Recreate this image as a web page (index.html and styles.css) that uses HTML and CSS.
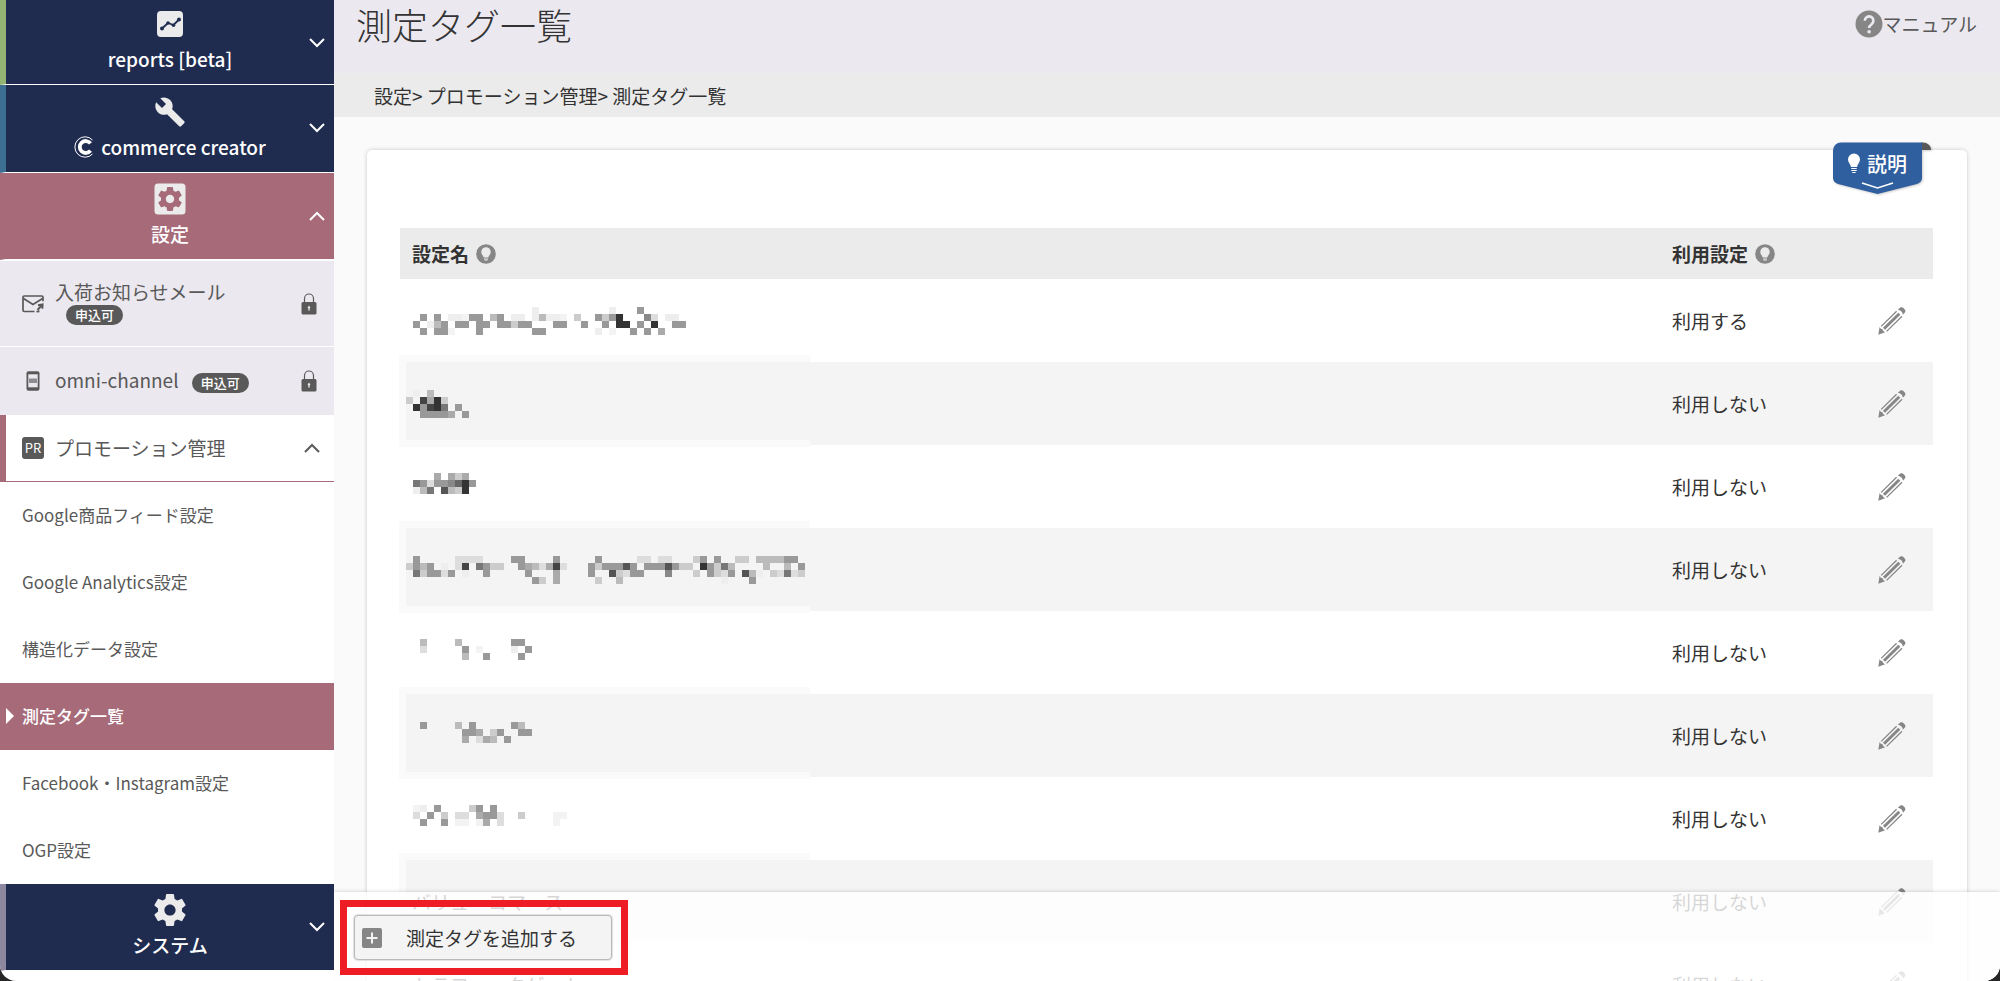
FILE: index.html
```html
<!DOCTYPE html>
<html lang="ja">
<head>
<meta charset="utf-8">
<title>測定タグ一覧</title>
<link rel="stylesheet" href="styles.css">
</head>
<body>
<svg class="defs" aria-hidden="true">
  <symbol id="chev-down" viewBox="0 0 16 10"><path d="M1 1l7 7 7-7" fill="none" stroke="currentColor" stroke-width="2"/></symbol>
  <symbol id="chev-up" viewBox="0 0 16 10"><path d="M1 9l7-7 7 7" fill="none" stroke="currentColor" stroke-width="2"/></symbol>
  <symbol id="gear" viewBox="2 2 20 20"><path fill="currentColor" d="M19.43 12.98c.04-.32.07-.64.07-.98s-.03-.66-.07-.98l2.11-1.65c.19-.15.24-.42.12-.64l-2-3.46c-.12-.22-.39-.3-.61-.22l-2.49 1c-.52-.4-1.08-.73-1.69-.98l-.38-2.65C14.46 2.18 14.25 2 14 2h-4c-.25 0-.46.18-.49.42l-.38 2.65c-.61.25-1.17.59-1.69.98l-2.49-1c-.23-.09-.49 0-.61.22l-2 3.46c-.13.22-.07.49.12.64l2.11 1.65c-.04.32-.07.65-.07.98s.03.66.07.98l-2.11 1.65c-.19.15-.24.42-.12.64l2 3.46c.12.22.39.3.61.22l2.49-1c.52.4 1.08.73 1.69.98l.38 2.65c.03.24.24.42.49.42h4c.25 0 .46-.18.49-.42l.38-2.65c.61-.25 1.17-.59 1.69-.98l2.49 1c.23.09.49 0 .61-.22l2-3.46c.12-.22.07-.49-.12-.64l-2.11-1.65zM12 15.5c-1.93 0-3.5-1.57-3.5-3.5s1.57-3.5 3.5-3.5 3.5 1.57 3.5 3.5-1.57 3.5-3.5 3.5z"/></symbol>
  <symbol id="lock" viewBox="0 0 16 22"><path d="M3.5 10V5.5a4.5 4.5 0 0 1 9 0V10" fill="none" stroke="#595959" stroke-width="1.2"/><rect x=".5" y="9" width="15" height="12.500" rx="1.500" fill="#595959"/><path d="M8 12.500l1.500 2.300-.8.300v2.400H7.300v-2.400l-.8-.3z" fill="#ebe8ef"/></symbol>
  <symbol id="hint" viewBox="0 0 20 20"><circle cx="10" cy="10" r="9.800" fill="#868686"/><path d="M10 3.200a4.700 4.700 0 0 1 4.700 4.700c0 2.400-1.900 3.500-2.400 5.600H7.700c-.5-2.100-2.400-3.200-2.400-5.600A4.700 4.700 0 0 1 10 3.200z" fill="#ebebeb"/><path d="M8 14.200h4v1.300L11 17H9l-1-1.500z" fill="#c4c4c4"/></symbol>
  <symbol id="pencil" viewBox="0 0 28 28"><g fill="#868686"><path d="M19.800 2.700L22 .8c1.300-.9 2.700-.5 3.900.6 1.400 1.300 2 2.700 1 4.100l-2 2.300c-.2-1.400-.7-2.500-1.700-3.500-1-.9-2.100-1.400-3.400-1.600z"/><path d="M.3 27.700l1.300-7.600 1.200 1.600 1.700.5.700 1.800 1.900 1.200z"/></g><path d="M3.200 19.400L18.600 4.200M8.600 24.400L24 9.200" stroke="#868686" stroke-width="1.300" fill="none"/><path d="M6 21.700L21.300 6.700" stroke="#868686" stroke-width="3" fill="none"/></symbol>
</svg>

<div class="page">
  <nav class="side">
    <button class="group group-reports" type="button">
      <svg class="group-icon" viewBox="0 0 32 32"><rect x="3" y="3" width="26" height="26" rx="4" fill="#ebebeb"/><path d="M8 20.500l6-5.500 5.500 2 5.500-5.500" fill="none" stroke="#1f2c50" stroke-width="1.800"/><g fill="#1f2c50"><circle cx="8" cy="20.500" r="2"/><circle cx="14" cy="15" r="1.800"/><circle cx="19.500" cy="17.300" r="1.800"/><circle cx="25" cy="11.500" r="2"/></g></svg>
      <span class="group-label">reports [beta]</span>
      <svg class="chev"><use href="#chev-down"/></svg>
    </button>
    <button class="group group-commerce" type="button">
      <svg class="group-icon" viewBox="0 0 24 24"><path fill="#ebebeb" d="M22.700 19l-9.100-9.100c.9-2.300.4-5-1.500-6.900-2-2-5-2.400-7.400-1.300L9 6 6 9 1.600 4.700C.4 7.100.9 10.100 2.900 12.100c1.900 1.900 4.600 2.400 6.900 1.500l9.100 9.100c.4.400 1 .4 1.400 0l2.300-2.300c.5-.4.500-1.100.1-1.400z"/></svg>
      <span class="group-label"><svg class="brand" viewBox="0 0 20 22"><path d="M18.500 4A10.200 10.200 0 1 0 18.500 18" fill="none" stroke="#fff" stroke-width="1"/><path d="M16.500 7.300A6 6 0 1 0 16.500 14.700" fill="none" stroke="#fff" stroke-width="3.800"/></svg>commerce creator</span>
      <svg class="chev"><use href="#chev-down"/></svg>
    </button>
    <button class="group group-settings" type="button">
      <svg class="group-icon" viewBox="0 0 32 32"><rect x=".5" y=".5" width="31" height="31" rx="3.500" fill="#ebebeb"/><svg x="4" y="4" width="24" height="24" color="#a66a79"><use href="#gear"/></svg></svg>
      <span class="group-label">設定</span>
      <svg class="chev"><use href="#chev-up"/></svg>
    </button>

    <a class="item item-tall" href="#">
      <svg class="item-icon" viewBox="0 0 22 22"><path d="M12.500 18.500H2.200A1.200 1.200 0 0 1 1 17.300V4.200A1.200 1.200 0 0 1 2.200 3h17.600A1.200 1.200 0 0 1 21 4.200v4" fill="none" stroke="#595959" stroke-width="1.700"/><path d="M1.500 5.500l9.500 6 9.500-6" fill="none" stroke="#595959" stroke-width="1.700"/><path d="M15.500 17l4.500-5M16 12.200l4.600-.8-.2 4.400M14.500 18.600l3-.2" fill="none" stroke="#595959" stroke-width="1.900"/></svg>
      <span class="item-text">入荷お知らせメール <span class="badge">申込可</span></span>
      <svg class="lock"><use href="#lock"/></svg>
    </a>
    <a class="item" href="#">
      <svg class="item-icon" viewBox="0 0 22 22"><rect x="4.500" y="1.200" width="13" height="19.600" rx="2" fill="#595959"/><rect x="6.300" y="4.300" width="9.400" height="13" fill="#ebe8ef"/><path d="M8 8.500v4.500M10 8.500v4.500M12 8.500v4.500M14 8.500v4.500" stroke="#595959" stroke-width="1.300"/></svg>
      <span class="item-text">omni-channel <span class="badge">申込可</span></span>
      <svg class="lock"><use href="#lock"/></svg>
    </a>
    <button class="item item-open" type="button">
      <span class="pr">PR</span>
      <span class="item-text">プロモーション管理</span>
      <svg class="chev"><use href="#chev-up"/></svg>
    </button>
    <ul class="sub">
      <li><a href="#">Google商品フィード設定</a></li>
      <li><a href="#">Google Analytics設定</a></li>
      <li><a href="#">構造化データ設定</a></li>
      <li><a class="current" href="#">測定タグ一覧</a></li>
      <li><a href="#">Facebook・Instagram設定</a></li>
      <li><a href="#">OGP設定</a></li>
    </ul>
    <button class="group group-system" type="button">
      <svg class="group-icon" color="#ebebeb"><use href="#gear"/></svg>
      <span class="group-label">システム</span>
      <svg class="chev"><use href="#chev-down"/></svg>
    </button>
  </nav>

  <main class="main">
    <header class="head">
      <h1>測定タグ一覧</h1>
      <a class="manual" href="#"><svg class="manual-icon" viewBox="0 0 28 28"><circle cx="14" cy="14" r="13.500" fill="#868686"/><path d="M9.800 10.800a4.300 4.300 0 1 1 6.900 3.300c-1.600 1.200-2.600 1.900-2.600 4" fill="none" stroke="#ebe8ef" stroke-width="2.600"/><circle cx="14.100" cy="21.800" r="1.800" fill="#ebe8ef"/></svg>マニュアル</a>
    </header>
    <div class="crumbs">設定&gt; プロモーション管理&gt; 測定タグ一覧</div>

    <section class="card">
      <button class="explain" type="button">
        <svg class="explain-shape" viewBox="0 0 98 53"><path d="M88 .5h2a8 7 0 0 1 8 7.500H88z" fill="#595959"/><path d="M8 .5h81V36c0 3-2 5-5 6L44.500 52 5 42c-3-1-5-3-5-6V8.500a8 8 0 0 1 8-8z" fill="#2f5f9e"/><path d="M29 41l15.500 5L60 41" fill="none" stroke="#fff" stroke-width="1.600"/><path d="M21 11.500a6 6 0 0 1 6 6c0 3-2.500 4.500-3 7.500h-6c-.5-3-3-4.500-3-7.500a6 6 0 0 1 6-6z" fill="#fff"/><path d="M18.300 26.500h5.400M18.300 28.500h5.400M19.300 30.500h3.400" stroke="#fff"/></svg>
        <span class="explain-label">説明</span>
      </button>
      <table class="tags">
        <colgroup><col><col class="col-use"><col class="col-edit"></colgroup>
        <thead>
          <tr><th scope="col"><span class="th">設定名<svg class="hint"><use href="#hint"/></svg></span></th><th scope="col"><span class="th">利用設定<svg class="hint"><use href="#hint"/></svg></span></th><th></th></tr>
        </thead>
        <tbody>
          <tr><td class="masked"><svg class="mosaic" data-rows="..................e..........e...9|..9.9.eef99.b9.ee.ebeef.c..9c93...8d.ee|.9.eb9.99.99.99c99...99..9..9.33.9.3..99|..9.99f...9.......99.......e.f..9.9.a"></svg></td><td>利用する</td><td class="edit"><button type="button" aria-label="編集"><svg><use href="#pencil"/></svg></button></td></tr>
          <tr><td class="masked"><svg class="mosaic" data-rows=".e.b|c.4a3c|.39437.9|..9999a.9"></svg></td><td>利用しない</td><td class="edit"><button type="button" aria-label="編集"><svg><use href="#pencil"/></svg></button></td></tr>
          <tr><td class="masked"><svg class="mosaic" data-rows="....a.aca|.79d998639|.eb7.5bc3"></svg></td><td>利用しない</td><td class="edit"><button type="button" aria-label="編集"><svg><use href="#pencil"/></svg></button></td></tr>
          <tr><td class="masked"><svg class="mosaic" data-rows=".9.....dddd....99....9.....9.....dd.dd...c9.9..cc.bbbb99|c9b9.e.d4.79cc..9abda4d...9c99959.99959cc.39c7b....b..b.9|.7c99d9.e..9.....9...a....9..5cd99...8...c.9cd9.5be.cd7dc|..................9c.a.....c..b..............e...9"></svg></td><td>利用しない</td><td class="edit"><button type="button" aria-label="編集"><svg><use href="#pencil"/></svg></button></td></tr>
          <tr><td class="masked"><svg class="mosaic" data-rows="..b....b.......99|..d.....9.f....e.9|........b..9....9"></svg></td><td>利用しない</td><td class="edit"><button type="button" aria-label="編集"><svg><use href="#pencil"/></svg></button></td></tr>
          <tr><td class="masked"><svg class="mosaic" data-rows="..9....b.9.....9b|........99a.c9..99|........a.dab.9"></svg></td><td>利用しない</td><td class="edit"><button type="button" aria-label="編集"><svg><use href="#pencil"/></svg></button></td></tr>
          <tr><td class="masked"><svg class="mosaic" data-rows=".fe.9....c9.9|.d.9.c.dd.a99d..c....ff|..9..9.ff.fa.d.......f"></svg></td><td>利用しない</td><td class="edit"><button type="button" aria-label="編集"><svg><use href="#pencil"/></svg></button></td></tr>
          <tr><td class="masked masked-text"><span>バリューコマース</span></td><td>利用しない</td><td class="edit"><button type="button" aria-label="編集"><svg><use href="#pencil"/></svg></button></td></tr>
          <tr><td>トラフィックゲート</td><td>利用しない</td><td class="edit"><button type="button" aria-label="編集"><svg><use href="#pencil"/></svg></button></td></tr>
        </tbody>
      </table>
    </section>

    <footer class="actions">
      <div class="callout">
        <button class="add" type="button"><svg class="add-icon" viewBox="0 0 20 20"><rect width="20" height="20" rx="2" fill="#868686"/><path d="M10 4.500v11M4.500 10h11" stroke="#f4f4f4" stroke-width="2"/></svg>測定タグを追加する</button>
      </div>
    </footer>
  </main>
</div>
<script src="script.js"></script>
</body>
</html>
```

FILE: styles.css
```css
*, *::before { box-sizing: border-box; }
body {
  margin: 0;
  background: #262626;
  color: #333;
  font: 19px/28px "Noto Sans CJK JP", "Noto Sans", sans-serif;
}
button { margin: 0; padding: 0; border: 0; background: none; color: inherit; font: inherit; cursor: pointer; }
a { color: inherit; text-decoration: none; }
svg { display: block; flex: none; }
.defs { position: absolute; width: 0; height: 0; }

.page {
  display: grid;
  grid-template-columns: 334px 1fr;
  height: 100vh;
  overflow: hidden;
  border-radius: 0 0 16px 16px;
  background: #fff;
}

/* sidebar */
.side { display: flex; flex-direction: column; min-width: 0; color: #595959; }
.group {
  position: relative;
  display: flex;
  flex-direction: column;
  align-items: center;
  justify-content: flex-end;
  flex: none;
  gap: 5px;
  width: 100%;
  height: 87px;
  padding-bottom: 11px;
  border-left: 6px solid #1f2c50;
  border-bottom: 1px solid #fff;
  background: #1f2c50;
  background-clip: padding-box;
  color: #fff;
  font-weight: 500;
}
.group-icon { width: 32px; height: 32px; }
.group-label { display: flex; align-items: center; gap: 7px; }
.group .chev { position: absolute; right: 9px; top: 38px; }
.group-reports { height: 85px; border-left-color: #94b474; }
.group-commerce { height: 88px; border-left-color: #3d6f93; }
.group-settings { border-left-color: #a66a79; background-color: #a66a79; }
.group-system { border-left-color: #8d879f; }
.chev { width: 16px; height: 10px; }
.brand { width: 20px; height: 22px; }

.item {
  display: flex;
  align-items: center;
  flex: none;
  gap: 11px;
  min-height: 68px;
  padding: 0 17px 0 22px;
  background: #ebe8ef;
  text-align: left;
}
.item-tall { min-height: 87px; border-top: 1px solid #fff; border-bottom: 1px solid #fff; }
.item-icon { width: 22px; height: 22px; }
.item-text { flex: 1; line-height: 22px; }
.lock { width: 16px; height: 22px; }
.badge {
  display: inline-block;
  margin-left: 9px;
  padding: 0 9px;
  border-radius: 10px;
  background: #595959;
  color: #fff;
  font-size: 13px;
  font-weight: 500;
  line-height: 20px;
}
.item-tall .item-text { line-height: 20px; }
.item-tall .badge { margin-left: 11px; }
.item-open {
  min-height: 67px;
  padding: 0 14px 0 16px;
  border-left: 6px solid #a66a79;
  border-bottom: 1px solid #a66a79;
  background: #fff;
}
.pr {
  width: 22px;
  border-radius: 3px;
  background: #595959;
  color: #fff;
  font-size: 13px;
  line-height: 22px;
  text-align: center;
}
.sub { margin: 0; padding: 0; list-style: none; font-size: 17px; }
.sub a { display: flex; align-items: center; height: 67px; padding: 0 0 2px 22px; }
.sub .current { gap: 8px; padding-left: 6px; background: #a66a79; color: #fff; font-weight: 500; }
.sub .current::before {
  content: "";
  border: solid transparent;
  border-width: 8px 0 8px 8px;
  border-left-color: #fff;
}

/* main column */
.main { position: relative; min-width: 0; overflow: hidden; background: #fafafa; }
.head {
  display: flex;
  align-items: flex-start;
  justify-content: space-between;
  padding: 0 23px 24px 22px;
  background: #ebe8ef;
}
.head h1 { margin: 0; font-size: 36px; font-weight: 200; line-height: 49px; }
.manual { display: flex; align-items: center; color: #595959; line-height: 48px; }
.manual-icon { width: 28px; height: 28px; }
.crumbs { padding: 9px 40px 7px; background: #ebebeb; }

.card {
  position: relative;
  margin: 33px 33px 0;
  padding: 78px 34px 40px 33px;
  border-radius: 5px;
  background: #fff;
  box-shadow: 0 0 4px rgba(0, 0, 0, 0.2);
}
.explain { position: absolute; top: -8px; right: 36px; width: 98px; height: 53px; }
.explain-shape { width: 98px; height: 53px; filter: drop-shadow(1px 1px 1px rgba(0, 0, 0, 0.2)); }
.explain-label { position: absolute; left: 34px; top: 8px; color: #fff; font-size: 20px; font-weight: 500; }

.tags { width: 100%; border-collapse: collapse; table-layout: fixed; }
.col-use { width: 190px; }
.col-edit { width: 83px; }
.tags th { height: 51px; padding: 0 12px; background: #ebebeb; text-align: left; font-weight: 700; }
.th { display: flex; align-items: center; gap: 7px; }
.hint { width: 20px; height: 20px; }
.tags td { height: 83px; padding: 0 12px; }
.tags tbody tr:nth-child(even) { background: #f4f4f4; }
.tags .masked { position: relative; padding: 28px 6px 20px; vertical-align: top; }
.tags .masked-text { padding: 0 12px; vertical-align: middle; }
.tags tr:nth-child(even) .masked::before {
  content: "";
  position: absolute;
  top: -7px;
  bottom: -2px;
  left: -1px;
  width: 411px;
  border: solid #fafafa;
  border-width: 7px 0 7px 7px;
}
.mosaic, .masked-text span { position: relative; }
.tags .edit { padding: 0; }
.edit button { display: block; margin: 0 auto; }
.edit svg { width: 28px; height: 28px; }

/* bottom action bar */
.actions {
  position: absolute;
  right: 0;
  bottom: 0;
  left: 0;
  display: flex;
  padding: 8px 6px 6px;
  background: rgba(255, 255, 255, 0.8);
  box-shadow: 0 0 4px rgba(0, 0, 0, 0.2);
}
.callout { padding: 8px 9px 8px 7px; border: 7px solid #ee1c25; }
.add {
  display: flex;
  align-items: center;
  gap: 24px;
  height: 45px;
  padding: 0 34px 0 7px;
  border: 1px solid #b9b9b9;
  border-radius: 4px;
  background: #f4f4f4;
  box-shadow: 0 0 1px 1px rgba(0, 0, 0, 0.12);
}
.add-icon { width: 20px; height: 20px; }
```

FILE: script.js
```js
// Draws each masked name as a grid of grey cells; one hex digit is one cell's grey level.
const CELL = 7;
const NS = "http://www.w3.org/2000/svg";
document.querySelectorAll(".mosaic").forEach((svg) => {
  const rows = svg.dataset.rows.split("|");
  const cols = Math.max(...rows.map((r) => r.length));
  svg.setAttribute("width", cols * CELL);
  svg.setAttribute("height", rows.length * CELL);
  svg.setAttribute("shape-rendering", "crispEdges");
  rows.forEach((row, y) => {
    [...row].forEach((level, x) => {
      if (level === ".") return;
      const rect = document.createElementNS(NS, "rect");
      rect.setAttribute("x", x * CELL);
      rect.setAttribute("y", y * CELL);
      rect.setAttribute("width", CELL);
      rect.setAttribute("height", CELL);
      rect.setAttribute("fill", level === "f" ? "#f3f3f3" : "#" + level.repeat(3));
      svg.append(rect);
    });
  });
});
```
